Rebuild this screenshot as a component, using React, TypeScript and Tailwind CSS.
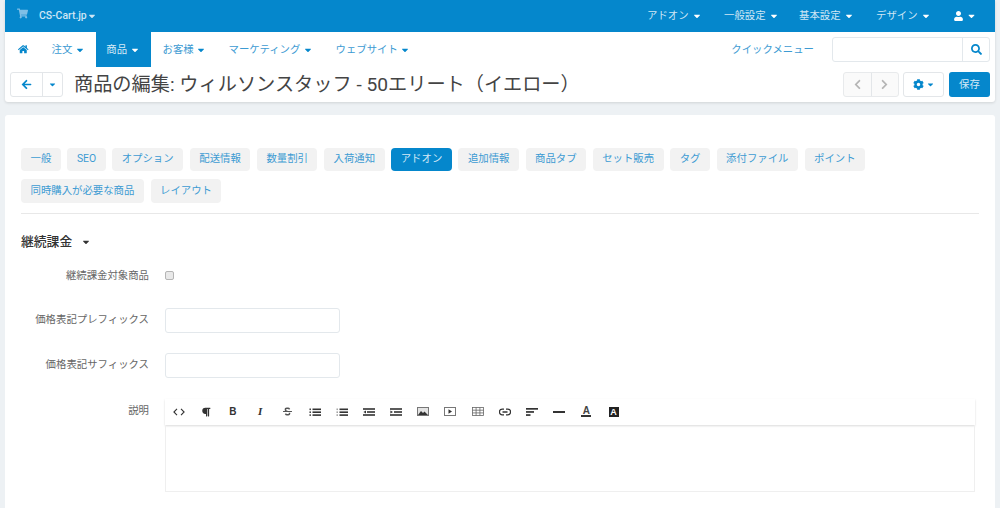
import React from "react";
import {
  FaShoppingCart,
  FaHome,
  FaArrowLeft,
  FaCaretDown,
  FaSearch,
  FaUser,
  FaCog,
  FaChevronLeft,
  FaChevronRight,
  FaParagraph,
  FaStrikethrough,
} from "react-icons/fa";

const font = "font-['Roboto','Noto_Sans_CJK_JP',sans-serif]";

const Caret = ({ className = "" }: { className?: string }) => (
  <FaCaretDown className={`inline-block text-[10px] ${className}`} />
);

const topItems = [
  { label: "アドオン", width: "w-[77px]" },
  { label: "一般設定", width: "w-[75px]" },
  { label: "基本設定", width: "w-[77px]" },
  { label: "デザイン", width: "w-[78px]" },
];

const navItems = [
  { label: "注文", width: "w-[44px]", gap: "ml-[23px]" },
  { label: "商品", active: true },
  { label: "お客様", gap: "ml-[12px]", width: "w-[66px]" },
  { label: "マーケティング", width: "w-[107px]" },
  { label: "ウェブサイト" },
];

const tabs = [
  "一般",
  "SEO",
  "オプション",
  "配送情報",
  "数量割引",
  "入荷通知",
  "アドオン",
  "追加情報",
  "商品タブ",
  "セット販売",
  "タグ",
  "添付ファイル",
  "ポイント",
  "同時購入が必要な商品",
  "レイアウト",
];

const Lines = ({ kind }: { kind: "ul" | "ol" | "out" | "in" }) => {
  if (kind === "ul" || kind === "ol") {
    const dot = kind === "ul" ? "#333" : "#999";
    return (
      <svg width="12" height="8" viewBox="0 0 12 8" fill="#333">
        <rect x="3.5" y="0.5" width="8.5" height="1.6" />
        <rect x="3.5" y="3.4" width="8.5" height="1.6" />
        <rect x="3.5" y="6.3" width="8.5" height="1.6" />
        <rect x="0.5" y="0.5" width="1.4" height="1.6" fill={dot} />
        <rect x="0.5" y="3.4" width="1.4" height="1.6" fill={dot} />
        <rect x="0.5" y="6.3" width="1.4" height="1.6" fill={dot} />
      </svg>
    );
  }
  return (
    <svg width="12" height="8" viewBox="0 0 12 8" fill="#333">
      <rect x="0" y="0.2" width="12" height="1.6" />
      <rect x="4" y="3.2" width="8" height="1.6" />
      <rect x="0" y="6.2" width="12" height="1.6" />
      {kind === "out" ? <path d="M3 2.4v3.2L0.4 4z" /> : <path d="M0.4 2.4v3.2L3 4z" />}
    </svg>
  );
};

const tools: React.ReactNode[] = [
  <svg key="code" width="12" height="8" viewBox="0 0 12 8" fill="none" stroke="#333" strokeWidth="1.1">
    <path d="M4 0.8L0.9 4 4 7.2M8 0.8L11.1 4 8 7.2" />
  </svg>,
  <FaParagraph key="p" className="text-[10px] text-[#333]" />,
  <span key="b" className="text-[10px] leading-none font-bold text-[#333] font-['Liberation_Sans',sans-serif]">B</span>,
  <span key="i" className="text-[11px] leading-none font-bold italic text-[#333] font-['Liberation_Serif',serif]">I</span>,
  <FaStrikethrough key="s" className="text-[9px] text-[#555]" />,
  <Lines key="ul" kind="ul" />,
  <Lines key="ol" kind="ol" />,
  <Lines key="out" kind="out" />,
  <Lines key="in" kind="in" />,
  <svg key="img" width="12" height="9" viewBox="0 0 12 9">
    <rect x="0.5" y="0.5" width="11" height="8" fill="#e4e4e4" stroke="#777" />
    <path d="M1 8l3-4 2 2 1.5-1.5L11 8z" fill="#333" />
  </svg>,
  <svg key="video" width="12" height="9" viewBox="0 0 12 9" fill="none">
    <rect x="0.5" y="0.5" width="11" height="8" stroke="#777" />
    <path d="M4.5 2.2v4.6L8 4.5z" fill="#333" />
  </svg>,
  <svg key="table" width="12" height="9" viewBox="0 0 12 9" fill="none" stroke="#666" strokeWidth="0.8">
    <rect x="0.5" y="0.5" width="11" height="8" />
    <path d="M0.5 3.2h11M0.5 5.9h11M4.1 0.5v8M7.9 0.5v8" />
  </svg>,
  <svg key="link" width="12" height="8" viewBox="0 0 12 8" fill="none" stroke="#333" strokeWidth="1.3">
    <path d="M5 1.2H3.2a2.8 2.8 0 0 0 0 5.6H5M7 1.2h1.8a2.8 2.8 0 0 1 0 5.6H7M3.5 4h5" />
  </svg>,
  <svg key="align" width="12" height="8" viewBox="0 0 12 8" fill="#333">
    <rect width="12" height="1.7" />
    <rect y="3.1" width="8" height="1.7" />
    <rect y="6.2" width="4.5" height="1.7" />
  </svg>,
  <span key="hr" className="block h-[2px] w-[12px] bg-[#333]" />,
  <span key="a" className="block w-[10px] border-b-2 border-[#333] text-center text-[10px] leading-[9px] font-bold text-[#444] font-['Liberation_Sans',sans-serif]">A</span>,
  <span key="ab" className="block h-[10px] w-[10px] bg-[#222] text-center text-[9px] leading-[10px] font-bold text-white font-['Liberation_Sans',sans-serif]">A</span>,
];

const labelClass = "w-[144px] shrink-0 text-right text-[10.4px] leading-[14px] text-[#666]";

export default function App() {
  return (
    <div className={`h-[508px] w-[1000px] overflow-hidden bg-[#edf1f4] px-[5px] ${font}`}>
      <div className="rounded-b-[3px] bg-white shadow-[0_1px_3px_rgba(0,0,0,0.12)]">
        <div className="flex h-[32px] items-center justify-between bg-[#0587cc] pl-[12px] pr-[19px] text-[10.4px] text-[#cfe6f5]">
          <div className="flex items-center">
            <FaShoppingCart className="mb-[4px] text-[11px] text-[#7fbfe6]" />
            <span className="ml-[11px] font-medium">CS-Cart.jp</span>
            <Caret />
          </div>
          <div className="flex items-center">
            {topItems.map((item) => (
              <span key={item.label} className={`${item.width} whitespace-nowrap`}>
                {item.label} <Caret className="ml-[1px] text-white" />
              </span>
            ))}
            <span className="flex w-[22px] items-center justify-end gap-[4px] text-white">
              <FaUser className="text-[10px]" />
              <Caret />
            </span>
          </div>
        </div>

        <div className="flex h-[35px] items-stretch pl-[13px] pr-[5px] text-[10.4px] text-[#3d9bd3]">
          <span className="flex items-center text-[#0587cc]">
            <FaHome className="text-[10.5px]" />
          </span>
          {navItems.map((item) =>
            item.active ? (
              <span key={item.label} className="flex w-[55px] items-center justify-center bg-[#0587cc] text-[#d5eaf7]">
                商品&nbsp;
                <Caret className="text-white" />
              </span>
            ) : (
              <span key={item.label} className={`flex items-center whitespace-nowrap ${item.gap ?? ""} ${item.width ?? ""}`}>
                {item.label}&nbsp;
                <Caret className="text-[#0587cc]" />
              </span>
            ),
          )}
          <div className="ml-auto flex items-center">
            <span className="mr-[18px] whitespace-nowrap">クイックメニュー</span>
            <div className="flex h-[25px] w-[158px] rounded-[3px] border border-[#e3e8ec]">
              <div className="flex-1" />
              <div className="flex w-[27px] items-center justify-center border-l border-[#e3e8ec] text-[#0587cc]">
                <FaSearch className="text-[11px]" />
              </div>
            </div>
          </div>
        </div>

        <div className="flex h-[35px] items-center px-[5px]">
          <div className="flex h-[25px] w-[53px] rounded-[3px] border border-[#e3e6e9] text-[#0587cc]">
            <div className="flex w-[32px] items-center justify-center border-r border-[#e3e6e9]">
              <FaArrowLeft className="text-[11px]" />
            </div>
            <div className="flex flex-1 items-center justify-center">
              <FaCaretDown className="text-[9px]" />
            </div>
          </div>
          <h1 className="ml-[11px] whitespace-nowrap text-[19.2px] leading-[26px] font-normal text-[#444]">
            商品の編集: ウィルソンスタッフ - 50エリート（イエロー）
          </h1>
          <div className="ml-auto flex items-center">
            <div className="flex h-[25px] w-[56px] rounded-[3px] border border-[#e8eaec] bg-[#fafafa] text-[#b5b5b5]">
              <div className="flex flex-1 items-center justify-center border-r border-[#e3e6e9]">
                <FaChevronLeft className="text-[11px]" />
              </div>
              <div className="flex flex-1 items-center justify-center">
                <FaChevronRight className="text-[11px]" />
              </div>
            </div>
            <div className="ml-[4px] flex h-[25px] w-[41px] items-center justify-center gap-[2px] rounded-[3px] border border-[#e3e6e9] text-[#0587cc]">
              <FaCog className="text-[11px]" />
              <FaCaretDown className="text-[9px]" />
            </div>
            <div className="ml-[5px] flex h-[25px] w-[41px] items-center justify-center rounded-[3px] bg-[#0587cc] text-[10.4px] text-[#d5eaf7]">
              保存
            </div>
          </div>
        </div>
      </div>

      <div className="mt-[13px] h-[400px] rounded-t-[3px] bg-white px-[16px] pt-[32.5px]">
        <div className="flex flex-wrap gap-x-[6.6px] gap-y-[8px] pr-[100px]">
          {tabs.map((tab) => (
            <span
              key={tab}
              className={`flex h-[23.5px] items-center whitespace-nowrap rounded-[4px] px-[9.5px] text-[10.4px] ${
                tab === "アドオン" ? "bg-[#0587cc] text-[#d5eaf7]" : "bg-[#f2f2f2] text-[#3d9bd3]"
              }`}
            >
              {tab}
            </span>
          ))}
        </div>
        <div className="mt-[10px] border-t border-[#e8e8e8]" />

        <div className="mt-[20px] flex h-[16px] items-center text-[12.8px] font-medium text-[#333]">
          継続課金
          <FaCaretDown className="ml-[9px] text-[10px] text-[#333]" />
        </div>

        <div className="mt-[18px] -ml-[16px] flex h-[16px] items-center">
          <label className={labelClass}>継続課金対象商品</label>
          <span className="ml-[16px] block h-[9px] w-[9px] rounded-[2px] border border-[#b5b5b5] bg-[#e9e9e9]" />
        </div>

        <div className="mt-[24px] -ml-[16px] flex items-center">
          <label className={labelClass}>価格表記プレフィックス</label>
          <div className="ml-[16px] h-[25px] w-[175px] rounded-[3px] border border-[#e3e8ec]" />
        </div>

        <div className="mt-[20px] -ml-[16px] flex items-center">
          <label className={labelClass}>価格表記サフィックス</label>
          <div className="ml-[16px] h-[25px] w-[175px] rounded-[3px] border border-[#e3e8ec]" />
        </div>

        <div className="mt-[21px] -ml-[16px] flex items-start">
          <label className={`${labelClass} mt-[5px]`}>説明</label>
          <div className="ml-[16px] w-[810px]">
            <div className="flex h-[26px] items-center shadow-[0_1px_2px_rgba(0,0,0,0.15)]">
              {tools.map((tool, i) => (
                <span key={i} className="flex w-[27.2px] items-center justify-center">
                  {tool}
                </span>
              ))}
            </div>
            <div className="h-[67px] border border-t-0 border-[#efefef]" />
          </div>
        </div>
      </div>
    </div>
  );
}
